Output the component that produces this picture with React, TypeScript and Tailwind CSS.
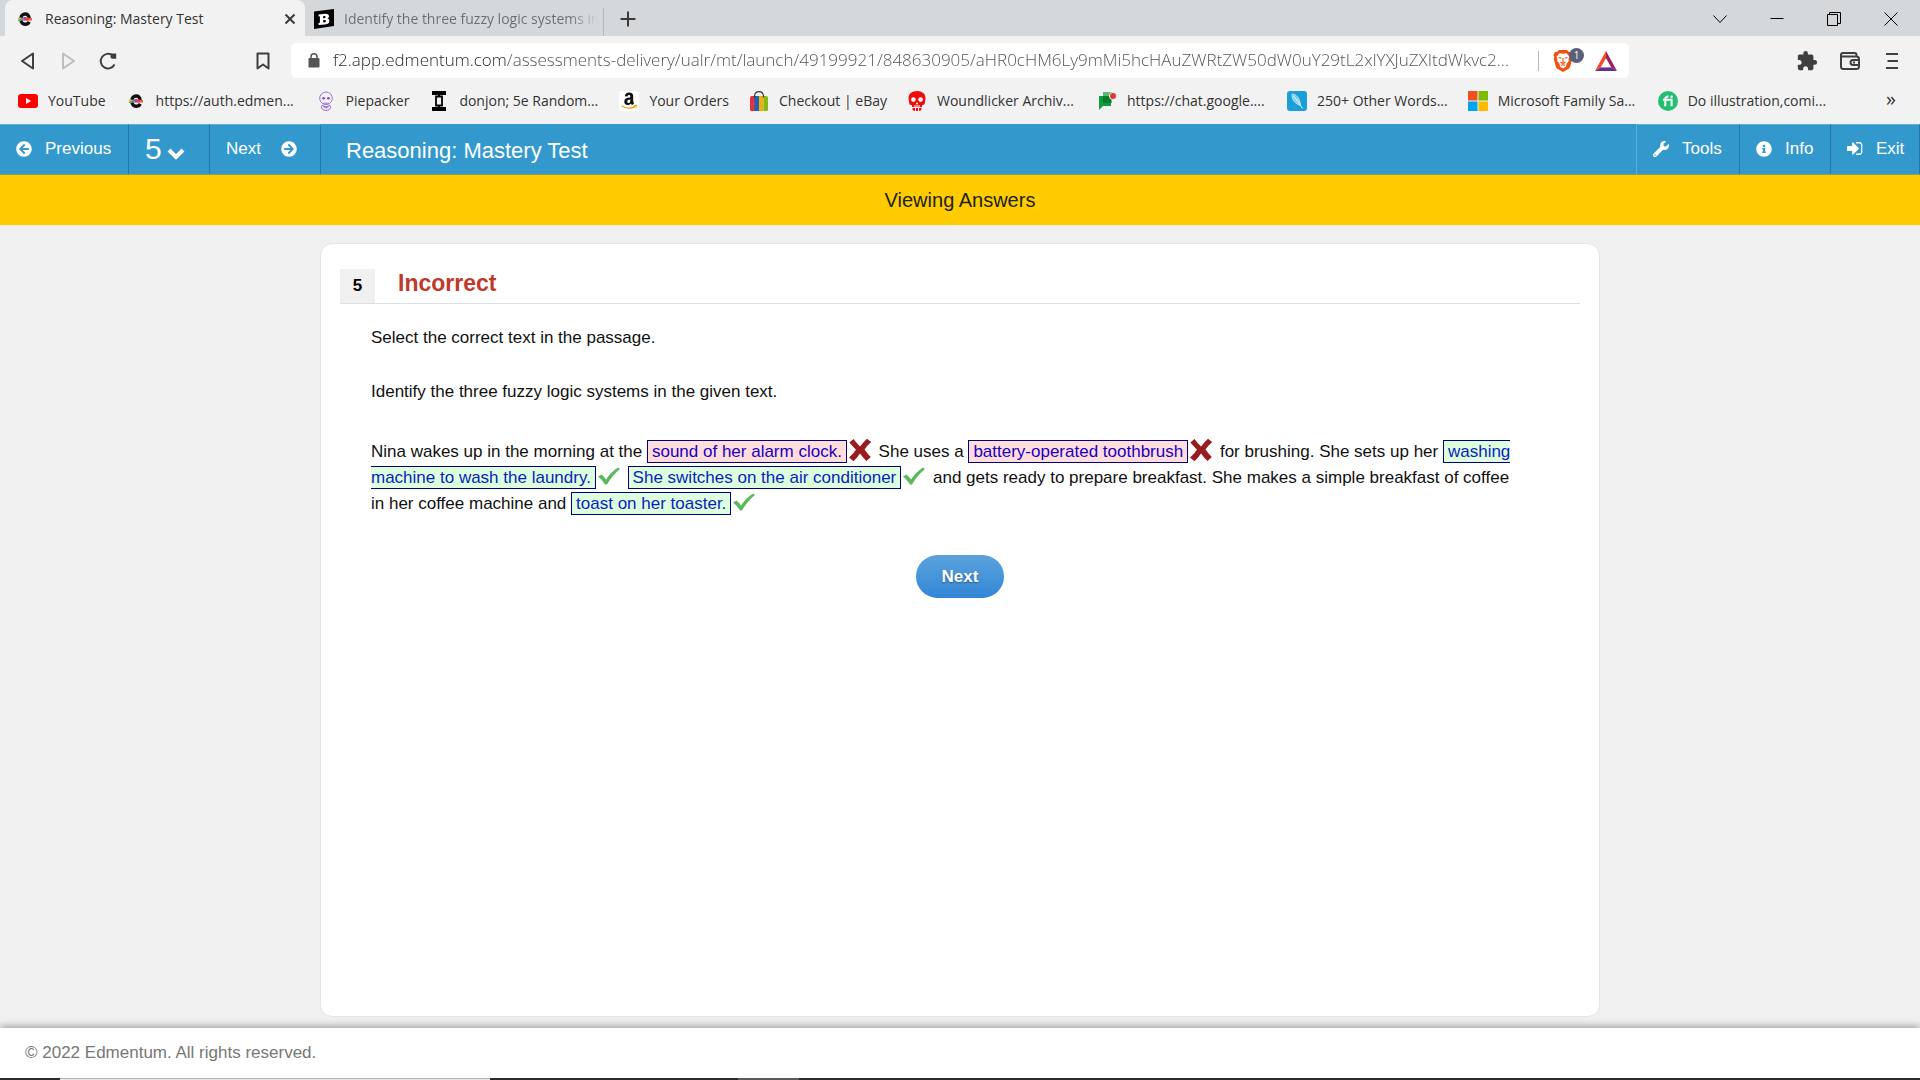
import type { ReactNode } from 'react';
import { FaArrowCircleLeft, FaArrowCircleRight, FaInfoCircle, FaWrench } from 'react-icons/fa';
import { MdExtension } from 'react-icons/md';

const ADDRESS =
  'f2.app.edmentum.com/assessments-delivery/ualr/mt/launch/49199921/848630905/aHR0cHM6Ly9mMi5hcHAuZWRtZW50dW0uY29tL2xlYXJuZXItdWkvc2...';

/* ---------- site icons ---------- */

function EdmentumIcon() {
  return (
    <svg viewBox="0 0 16 16" className="size-4" aria-hidden="true">
      <path d="M12 7V6.500A3.700 3.700 0 0 0 8.300 3H8A4 4 0 0 0 4 7v2.200A4 4 0 0 0 8 13.200h.3q2.600 0 4-2.400" fill="none" stroke="#111" strokeWidth="3.400" />
      <path d="M1 6.600h3v2H1z" fill="#f7b42c" />
      <path d="M1 8.600h3v1.400H1z" fill="#58b947" />
      <path d="M4 6.600h2.600v3H4z" fill="#29a9c9" />
      <path d="M6.400 6h3v3.600h-3z" fill="#d6358c" />
      <path d="M9 6.600h3v3H9z" fill="#ee3f3b" />
      <path d="M12 7h3v2.600h-3z" fill="#e9663a" />
    </svg>
  );
}

function BrainlyIcon() {
  return (
    <svg viewBox="0 0 20 20" className="size-5" aria-hidden="true">
      <path d="M0 2.6 20 0v17L0 20z" fill="#000" />
      <path
        d="M4.6 5.4 11 4.7c2.6-.2 4 .7 4 2.5 0 1.2-.7 1.9-1.8 2.3 1.400.2 2.200 1 2.200 2.400 0 2-1.500 3.200-4.400 3.500l-6.400.6v-2l1.300-.2V7.300l-1.300.1zM9.200 7v2.300l1.100-.1c.9-.1 1.300-.5 1.300-1.200s-.4-1.100-1.200-1zm0 4v2.600l1.300-.1c.9-.1 1.400-.6 1.400-1.400s-.5-1.200-1.400-1.200z"
        fill="#fff"
        fillRule="evenodd"
      />
    </svg>
  );
}

function YouTubeIcon() {
  return (
    <svg viewBox="0 0 20 14" className="h-3.5 w-5" aria-hidden="true">
      <rect width="20" height="14" rx="3" fill="#f00" />
      <path d="M8 4v6l5-3z" fill="#fff" />
    </svg>
  );
}

function PiepackerIcon() {
  return (
    <svg viewBox="0 0 16 20" className="h-5 w-4" fill="none" stroke="#9a6fd6" aria-hidden="true">
      <path d="M4.600 12.600A6.300 6.300 0 1 1 11.400 12.600Q8 11.400 4.600 12.600z" />
      <circle cx="5.600" cy="7.300" r="1.300" fill="#7a43cc" stroke="none" />
      <circle cx="10.400" cy="7.300" r="1.300" fill="#7a43cc" stroke="none" />
      <path d="M4 14.500q4-2.600 8 0 1.600 2.500-.8 4.200-3.200 1.600-6.400 0Q2.400 17 4 14.500z" />
      <path d="M5.400 15.600q2.600 3 5.200 0z" />
    </svg>
  );
}

function DonjonIcon() {
  return (
    <svg viewBox="0 0 14 20" className="h-5 w-3.5" aria-hidden="true">
      <path d="M0 0h14v4H0zM0 16h14v4H0zM6 4h2v12H6z" fill="#000" />
      <path d="M4 5.500h6v9H4z" fill="#f2f2f2" stroke="#000" strokeWidth="1.800" />
    </svg>
  );
}

function AmazonIcon() {
  return (
    <svg viewBox="0 0 20 20" className="size-5" aria-hidden="true">
      <rect width="20" height="20" rx="3" fill="#fff" />
      <path
        d="M5.800 5.300C6 2.700 7.600 1.400 10.200 1.400c2.600 0 4 1.200 4 3.700v5c0 .9.400 1.400 1 2.100l-1.900 1.900c-.7-.5-1.200-1-1.500-1.700-2.200 2.600-6.500 2-6.500-1.700 0-3 2.300-4 6-4.200v-.9c0-1.100-.4-1.600-1.300-1.600-.9 0-1.400.5-1.600 1.600zm5.500 3.200c-1.900.1-3.100.6-3.100 2.100 0 1.800 2 2 2.800.3.300-.6.300-1.300.3-2.400z"
        fill="#111"
      />
      <path d="M2.500 14.800q7 4.400 14 .6" fill="none" stroke="#f90" strokeWidth="1.300" />
      <path d="m14.700 14.600 2.800-.2-.8 2.600" fill="none" stroke="#f90" />
    </svg>
  );
}

function EbayIcon() {
  return (
    <svg viewBox="0 0 18 20" className="h-5 w-[18px]" aria-hidden="true">
      <path d="M0 6.500Q0 5 1.500 5H5v15H1.500Q0 20 0 18.500z" fill="#e53238" />
      <path d="M4.500 5H9v15H4.500z" fill="#1565c0" />
      <path d="M9 5h4.500v15H9z" fill="#f5af02" />
      <path d="M13.500 5h3Q18 5 18 6.500v12q0 1.500-1.500 1.500h-3z" fill="#86b817" />
      <path d="M4.500 6.500V5Q5 .7 9 .7T13.500 5v1.500" fill="none" stroke="#333" strokeWidth="1.200" />
    </svg>
  );
}

function SkullIcon() {
  return (
    <svg viewBox="0 0 18 20" className="h-5 w-[18px]" aria-hidden="true">
      <path
        d="M9 0c5.300 0 8.500 3 8.500 7.300 0 1.500-.5 2.500-.5 3.700 0 2.300-1.300 3-3 3.200V16H4v-1.800c-1.700-.2-3-.9-3-3.200 0-1.200-.5-2.200-.5-3.700C.5 3 3.700 0 9 0z"
        fill="#f20d0d"
      />
      <path d="M4.500 17v1.500q1 1.500 2.500 1.500V17zM8 17v3h2v-3zM11 17v3q1.500 0 2.500-1.500V17z" fill="#f20d0d" />
      <circle cx="5.400" cy="8.600" r="2.300" fill="#fff" />
      <circle cx="12.600" cy="8.600" r="2.300" fill="#fff" />
      <path d="m9 11-1.300 2.300h2.600zM6 14.500h6v1H6z" fill="#fff" />
    </svg>
  );
}

function ChatIcon() {
  return (
    <svg viewBox="0 0 20 20" className="size-5" aria-hidden="true">
      <path d="M6 1h9v11H6z" fill="#5cb873" />
      <path d="M2 5h12v10H6l-4 4z" fill="#0f9d3e" />
      <path d="M6 5h8v7H6z" fill="#087a2b" />
      <circle cx="16" cy="5" r="3.600" fill="#d33b35" stroke="#f2f2f2" />
    </svg>
  );
}

function QuillIcon() {
  return (
    <svg viewBox="0 0 20 20" className="size-5" aria-hidden="true">
      <rect width="20" height="20" rx="3" fill="#1b9fd8" />
      <path d="M5 3c4 0 8 4 8.500 11.500C8.500 13 4.500 9 5 3z" fill="#7fcdf0" stroke="#c9ecfb" strokeWidth=".8" />
      <path d="M6.500 5q4 4.500 9 12.500" fill="none" stroke="#e8f7fd" />
    </svg>
  );
}

function MicrosoftIcon() {
  return (
    <svg viewBox="0 0 20 20" className="size-5" aria-hidden="true">
      <path d="M0 0h9.500v9.500H0z" fill="#f25022" />
      <path d="M10.500 0H20v9.500h-9.500z" fill="#7fba00" />
      <path d="M0 10.500h9.500V20H0z" fill="#00a4ef" />
      <path d="M10.500 10.500H20V20h-9.500z" fill="#ffb900" />
    </svg>
  );
}

function FiverrIcon() {
  return (
    <svg viewBox="0 0 20 20" className="size-5" aria-hidden="true">
      <circle cx="10" cy="10" r="10" fill="#22bf73" />
      <path d="M5 8.800h8.600v6.400M7.300 15.200V8q0-2.600 3.200-2.400" fill="none" stroke="#fff" strokeWidth="2" />
      <circle cx="13.600" cy="5.700" r="1.200" fill="#fff" />
    </svg>
  );
}

/* ---------- browser icons ---------- */

function BraveIcon() {
  return (
    <svg viewBox="0 0 20 22" className="h-[22px] w-5" aria-hidden="true">
      <path d="M6 0h8l2 2 2-.2L19.500 5l-.8 2 .5 2-2 7.500q-.6 1.600-2 2.500L10 22l-5.200-3q-1.400-.9-2-2.500L.8 9l.5-2-.8-2L2 1.800 4 2z" fill="#f1500f" />
      <path d="m10 3.800 3.500-.6 3 3.600-1 2.200.3 2-2.300 2.800-.4 2.600L10 18.600l-3.100-2.200-.4-2.600L4.200 11l.3-2-1-2.200 3-3.600z" fill="#fff" />
      <path d="m5.500 7.500 3 .8M14.500 7.500l-3 .8M10 8v4.500M7.500 12l2.500 1.500 2.500-1.500M8 15.500l2-1 2 1" fill="none" stroke="#f1500f" strokeWidth="1.100" />
    </svg>
  );
}

function BatIcon() {
  return (
    <svg viewBox="0 0 22 20" className="h-5 w-[22px]" aria-hidden="true">
      <path d="M11 0 0 20l6-3.700 5-8.800z" fill="#ff4724" />
      <path d="m0 20 6-3.700h10l6 3.700z" fill="#662d91" />
      <path d="m11 0 11 20-6-3.700-5-8.800z" fill="#9e1f63" />
      <path d="m11 7.500 5 8.800H6z" fill="#fff" />
    </svg>
  );
}

function Stroke({ d, className, width = 2 }: { d: string; className: string; width?: number }) {
  return (
    <svg viewBox="0 0 20 20" className={className} fill="none" stroke="currentColor" strokeWidth={width} strokeLinejoin="round" aria-hidden="true">
      <path d={d} />
    </svg>
  );
}

function LockIcon() {
  return (
    <svg viewBox="0 0 12 15" className="h-[15px] w-3 shrink-0" aria-hidden="true">
      <rect x=".5" y="5" width="11" height="9.500" rx="1.200" fill="#555" />
      <path d="M3 6V3.800a3 3 0 0 1 6 0V6" fill="none" stroke="#555" strokeWidth="1.500" />
    </svg>
  );
}

function SignInIcon() {
  return (
    <svg viewBox="0 256 1600 1280" className="h-[13px] w-4" fill="currentColor" aria-hidden="true">
      <path d="M1184 896q0 26-19 45l-544 544q-19 19-45 19t-45-19-19-45v-288h-448q-26 0-45-19t-19-45v-384q0-26 19-45t45-19h448v-288q0-26 19-45t45-19 45 19l544 544q19 19 19 45zm352-352v704q0 119-84.500 203.500t-203.500 84.500h-320q-13 0-22.500-9.500t-9.500-22.500q0-4-1-20t-.5-26.500 3-23.500 10-19.500 20.500-6.500h320q66 0 113-47t47-113v-704q0-66-47-113t-113-47h-312l-11.500-1-11.500-3-8-5.500-7-9-2-13.500q0-4-1-20t-.5-26.500 3-23.500 10-19.500 20.500-6.500h320q119 0 203.500 84.500t84.500 203.500z" />
    </svg>
  );
}

/* ---------- browser chrome ---------- */

const bookmarks: { label: string; icon: ReactNode; long?: boolean }[] = [
  { label: 'YouTube', icon: <YouTubeIcon /> },
  { label: 'https://auth.edmen...', icon: <EdmentumIcon />, long: true },
  { label: 'Piepacker', icon: <PiepackerIcon /> },
  { label: 'donjon; 5e Random...', icon: <DonjonIcon />, long: true },
  { label: 'Your Orders', icon: <AmazonIcon /> },
  { label: 'Checkout | eBay', icon: <EbayIcon /> },
  { label: 'Woundlicker Archiv...', icon: <SkullIcon />, long: true },
  { label: 'https://chat.google....', icon: <ChatIcon />, long: true },
  { label: '250+ Other Words...', icon: <QuillIcon /> },
  { label: 'Microsoft Family Sa...', icon: <MicrosoftIcon />, long: true },
  { label: 'Do illustration,comi...', icon: <FiverrIcon />, long: true },
];

function TabStrip() {
  return (
    <div className="flex h-9 items-stretch bg-[#d4d8db] pl-[5px] text-[#3a3a3a]">
      <div className="flex w-[300px] items-center rounded-t-lg bg-[#f2f2f2] pt-px pr-[5px] pl-3">
        <EdmentumIcon />
        <span className="ml-3 flex-1 text-[#333]">Reasoning: Mastery Test</span>
        <button aria-label="Close tab">
          <Stroke d="m5.500 5.500 9 9M14.500 5.500l-9 9" className="size-5" />
        </button>
      </div>
      <div className="flex w-[298px] items-center pt-px pl-[9px]">
        <BrainlyIcon />
        <span className="ml-[10px] w-[254px] overflow-hidden bg-[linear-gradient(90deg,#6a6e71_225px,#6a6e7100_254px)] bg-clip-text whitespace-nowrap text-transparent">
          Identify the three fuzzy logic systems in
        </span>
      </div>
      <div className="mt-2 w-px bg-[#b4b8bb]" />
      <button className="pt-px pl-3.5" aria-label="New tab">
        <Stroke d="M10 2.500v15M2.500 10h15" className="size-5" />
      </button>
      <div className="ml-auto flex items-center gap-[37px] pt-px pr-[19px] text-black">
        <button aria-label="Search tabs"><Stroke d="m3.500 6.500 6.500 7 6.500-7" width={1} className="size-5" /></button>
        <button aria-label="Minimize"><Stroke d="M3.500 9.500h13" width={1} className="size-5" /></button>
        <button aria-label="Restore"><Stroke d="M3.500 5.500h10v11h-10zM5.500 5.500v-2h11v11h-3" width={1} className="size-5" /></button>
        <button aria-label="Close window"><Stroke d="m3.500 3.500 13 13M16.500 3.500l-13 13" width={1} className="size-5" /></button>
      </div>
    </div>
  );
}

function Toolbar() {
  return (
    <div className="flex h-[47px] items-center pt-0.5 text-[#3f3f3f]">
      <div className="flex w-[291px] shrink-0 items-center pl-[18px]">
        <button aria-label="Back"><Stroke d="M15 2.500v15L4 10z" className="size-5" /></button>
        <button aria-label="Forward" className="ml-5 text-[#bdbdbd]"><Stroke d="M5 2.500v15L16 10z" className="size-5" /></button>
        <button aria-label="Reload" className="ml-5">
          <svg viewBox="0 0 20 20" className="size-5" aria-hidden="true">
            <path d="M16.500 13.500A7.300 7.300 0 1 1 14.500 4.300" fill="none" stroke="currentColor" strokeWidth="2" />
            <path d="M12.500 6.500V2.600h5.700v5.200h-4.400z" fill="currentColor" />
          </svg>
        </button>
        <button aria-label="Bookmark this page" className="ml-auto mr-[18px]"><Stroke d="M4.500 2.500h11v15L10 13.500l-5.500 4z" className="size-5" /></button>
      </div>
      <div className="flex h-[35px] min-w-0 flex-1 items-center rounded-[5px] bg-white pr-3 pl-[17px]">
        <LockIcon />
        <input
          aria-label="Address"
          readOnly
          value={ADDRESS}
          className="ml-[13px] min-w-0 flex-1 bg-[linear-gradient(90deg,#222_174px,#4f4f4f_174px)] bg-clip-text text-[17px] font-light text-transparent outline-none"
        />
        <div className="ml-2 h-5 w-px bg-[#b9b9b9]" />
        <button className="relative ml-3.5 mr-[22px]" aria-label="Brave Shields, 1 blocked">
          <BraveIcon />
          <span className="absolute -top-0.5 left-4 flex size-[15px] items-center justify-center rounded-full bg-[#5b5f78] text-[10px] text-white">1</span>
        </button>
        <button aria-label="Brave Rewards"><BatIcon /></button>
      </div>
      <div className="flex w-[291px] shrink-0 items-center justify-end gap-[21px] pr-[18px]">
        <button aria-label="Extensions"><MdExtension className="size-[22px]" /></button>
        <button aria-label="Wallet">
          <svg viewBox="0 0 22 20" className="h-5 w-[22px]" fill="none" stroke="currentColor" strokeWidth="2" aria-hidden="true">
            <path d="M17.500 5.500V4a2 2 0 0 0-2-2H4a2 2 0 0 0-2 2v11.500a2.500 2.500 0 0 0 2.500 2.500h13a2.500 2.500 0 0 0 2.500-2.500V8a2.500 2.500 0 0 0-2.500-2.500H3M20 9h-6a2.500 2.500 0 0 0 0 5h6M14 11.500h2" />
          </svg>
        </button>
        <button aria-label="Menu"><Stroke d="M4 3h12M5.500 10h10.500M4 17h12" className="size-5" /></button>
      </div>
    </div>
  );
}

function BookmarkBar() {
  return (
    <nav aria-label="Bookmarks" className="flex h-[41px] items-center gap-5 border-b-[3px] border-[#eff3f8] pr-6 pb-0.5 pl-[18px] text-[#333]">
      {bookmarks.map((b) => (
        <a key={b.label} href="#" className="flex items-center gap-[10px] whitespace-nowrap">
          <span className="flex w-5 justify-center">{b.icon}</span>
          <span className={b.long ? 'w-[140px]' : ''}>{b.label}</span>
        </a>
      ))}
      <button className="ml-auto pb-1 text-xl leading-none" aria-label="More bookmarks">»</button>
    </nav>
  );
}

/* ---------- test player ---------- */

const barButton = 'flex h-full items-center border-t border-r border-t-[#62afd6] border-r-[#2478a5] pb-0.5 text-[17px]';

function PlayerBar() {
  return (
    <header className="flex h-[51px] items-center border-b border-[#8a9a5a] bg-[#39c] text-white">
      <button className={`${barButton} w-[129px] pl-4`}>
        <FaArrowCircleLeft className="size-4" />
        <span className="ml-[13px]">Previous</span>
      </button>
      <button className={`${barButton} w-[81px] pl-4`} aria-label="Question 5">
        <span className="text-[30px]">5</span>
        <svg viewBox="0 0 18 12" className="mt-2.5 ml-[5px] h-3 w-[18px]" aria-hidden="true">
          <path d="m2 2 7 7 7-7" fill="none" stroke="#fff" strokeWidth="4" />
        </svg>
      </button>
      <button className={`${barButton} w-[111px] pl-4`}>
        <span>Next</span>
        <FaArrowCircleRight className="ml-5 size-4" />
      </button>
      <h1 className="ml-[25px] pt-0.5 text-[22px]">Reasoning: Mastery Test</h1>
      <div className="ml-auto flex h-full">
        <button className={`${barButton} w-[104px] border-l border-l-[#62afd6] pl-4`}>
          <FaWrench className="size-4" />
          <span className="ml-[13px]">Tools</span>
        </button>
        <button className={`${barButton} w-[91px] pl-4`}>
          <FaInfoCircle className="size-4" />
          <span className="ml-[13px]">Info</span>
        </button>
        <button className={`${barButton} w-[89px] pl-4`}>
          <SignInIcon />
          <span className="ml-[13px]">Exit</span>
        </button>
      </div>
    </header>
  );
}

function Wrong({ children }: { children: ReactNode }) {
  return (
    <>
      <mark className="border border-[#000080] bg-[#ffdddd] px-1 py-px text-[#1a00c0]">{children}</mark>
      <svg viewBox="0 0 24 24" className="mr-0.5 ml-px inline h-6 w-6 align-[-5px]" role="img" aria-label="Incorrect">
        <path d="M5.500 1q3 4 6.500 7.500Q15.500 4 19 .8L23.200 4q-4 3.500-6.700 7.500 3.200 4.500 6.300 7.500L18.500 23q-3.500-3.200-6.500-7.500Q9 20 5.500 23.200L1 19.500Q5 16 8 11.700 4.500 8 1.300 4.500z" fill="#981b1e" />
      </svg>
    </>
  );
}

function Right({ children }: { children: ReactNode }) {
  return (
    <>
      <mark className="border border-[#000080] bg-[#ddffdd] px-1 py-px text-[#0a1ec0]">{children}</mark>
      <svg viewBox="0 0 24 18" className="mr-0.5 ml-px inline h-[18px] w-6 align-[-2px]" role="img" aria-label="Correct">
        <path d="M1 9.500 4.500 7.500Q7 9.500 9 12.500 14 5 21 .5L23 2Q15.500 8 10 17.500H8Q5 12.500 1 9.500z" fill="#5cb85c" />
      </svg>
    </>
  );
}

function QuestionCard() {
  return (
    <section className="mx-auto flex w-2/3 flex-1 flex-col rounded-xl border border-[#e4e4e4] bg-white px-[19px] pt-[25px]">
      <div className="flex h-[35px] border-b border-[#dfe0e1]">
        <span className="flex w-[35px] items-center justify-center bg-[#f0f0f0] text-[17px] font-bold text-black">5</span>
        <h2 className="ml-[23px] text-[23px] leading-[28px] font-bold text-[#c0392b]">Incorrect</h2>
      </div>
      <div className="pt-[21px] pr-[60px] pl-[31px] text-[17px] leading-[26px] text-[#111]">
        <p>Select the correct text in the passage.</p>
        <p className="mt-7">Identify the three fuzzy logic systems in the given text.</p>
        <p className="mt-[33px]">
          Nina wakes up in the morning at the <Wrong>sound of her alarm clock.</Wrong> She uses a{' '}
          <Wrong>battery-operated toothbrush</Wrong> for brushing. She sets up her{' '}
          <Right>washing machine to wash the laundry.</Right> <Right>She switches on the air conditioner</Right> and
          gets ready to prepare breakfast. She makes a simple breakfast of coffee in her coffee machine and{' '}
          <Right>toast on her toaster.</Right>
        </p>
      </div>
      <button className="mt-[38px] h-[43px] w-[88px] self-center rounded-full bg-linear-to-b from-[#5aa3dd] to-[#3386d6] text-[17px] font-bold text-white [text-shadow:0_1px_2px_rgba(0,0,0,0.4)]">
        Next
      </button>
    </section>
  );
}

export default function App() {
  return (
    <div className="flex min-h-screen flex-col bg-[#f0f0f0] font-['Liberation_Sans',Arial,sans-serif]">
      <div className="bg-[#f2f2f2] font-['Open_Sans','Noto_Sans',sans-serif] text-sm">
        <TabStrip />
        <Toolbar />
        <BookmarkBar />
      </div>
      <PlayerBar />
      <div className="flex h-[50px] items-center justify-center bg-[#fc0] text-xl text-[#222]">Viewing Answers</div>
      <main className="flex flex-1 flex-col pt-[18px] pb-[11px]">
        <QuestionCard />
      </main>
      <footer className="flex h-[50px] items-center bg-white px-[25px] text-[17px] text-[#777] shadow-[0_-1px_8px_rgba(0,0,0,0.4)]">
        © 2022 Edmentum. All rights reserved.
      </footer>
      <div className="flex h-0.5 bg-[#2b2b2b]">
        <div className="ml-[60px] w-[430px] border-t border-[#b5b5b5] bg-[#e8e8e8]" />
        <div className="ml-[248px] w-[61px] bg-[#5a5a5a]" />
      </div>
    </div>
  );
}
